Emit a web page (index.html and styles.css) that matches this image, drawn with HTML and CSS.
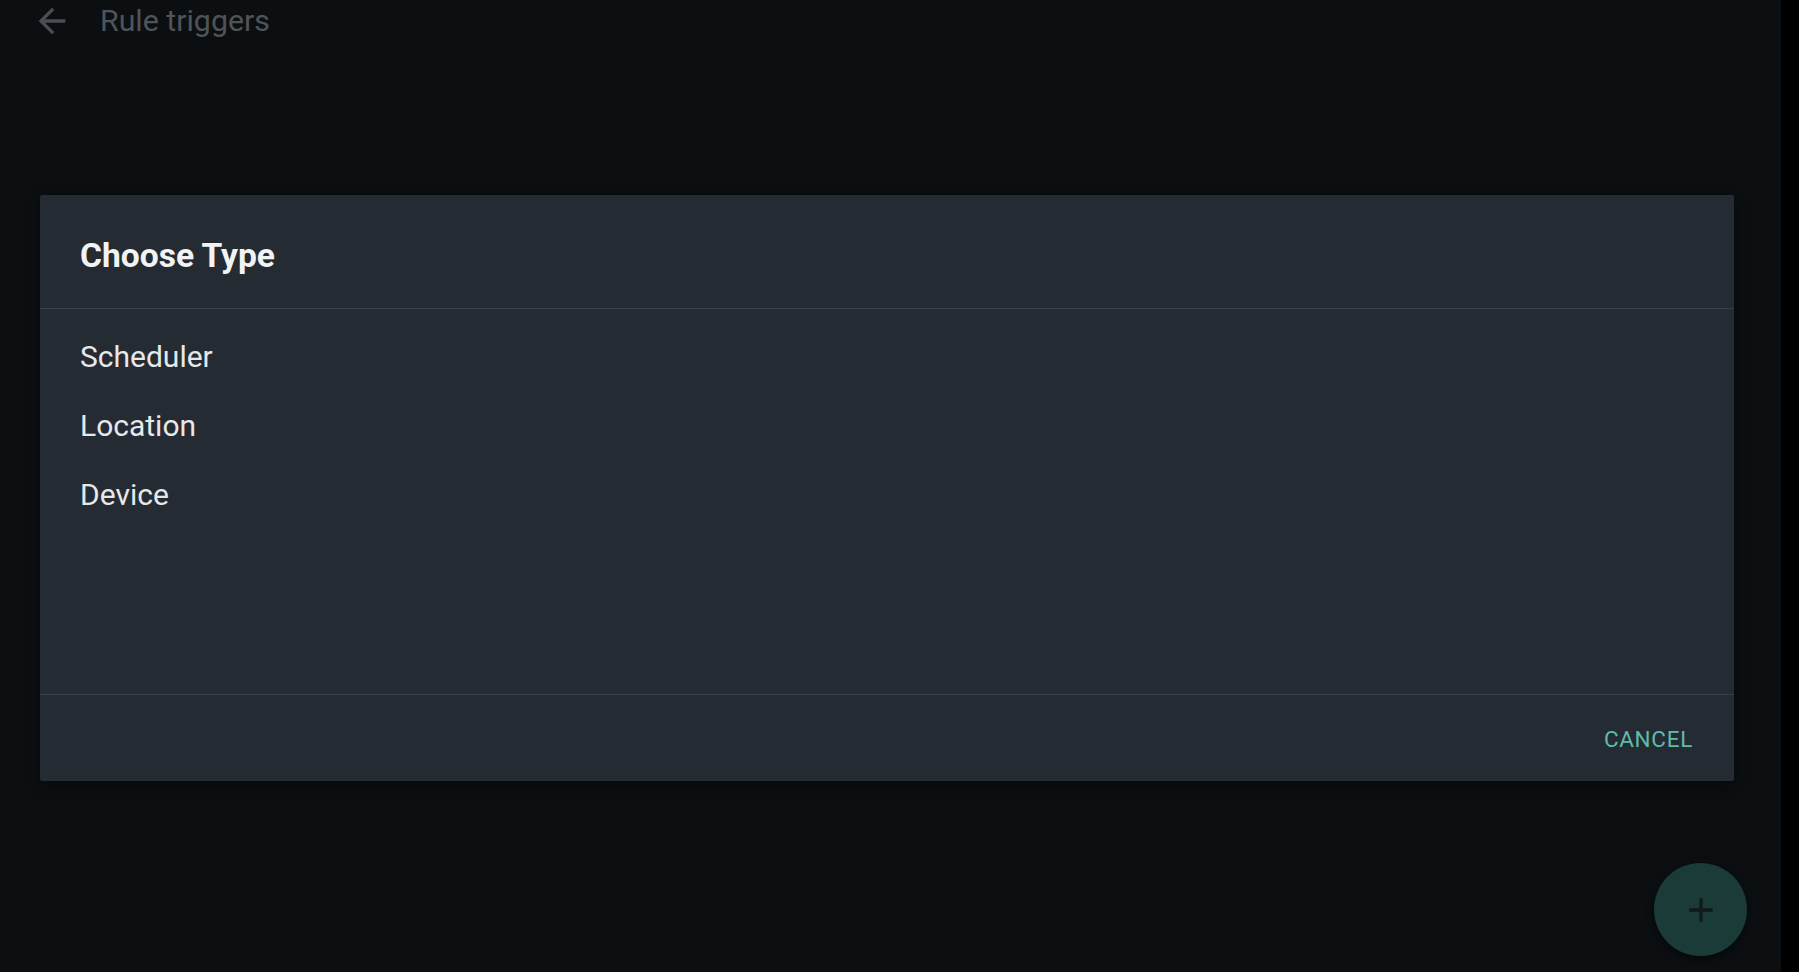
FILE: index.html
```html
<!DOCTYPE html>
<html>

  <head>
    <title>Rule triggers</title>
    <link rel="stylesheet" href="styles.css">
  </head>

  <body>
    <div class="app">
      <header class="toolbar">
        <svg class="back-icon" viewBox="0 0 24 24" width="40" height="40">
          <path d="M20 11H7.83l5.59-5.59L12 4l-8 8 8 8 1.41-1.41L7.83 13H20v-2z" fill="currentColor"/>
        </svg>
        <span class="toolbar-title">Rule triggers</span>
      </header>

      <div class="dialog">
        <div class="dialog-title">Choose Type</div>
        <ul class="dialog-list">
          <li>Scheduler</li>
          <li>Location</li>
          <li>Device</li>
        </ul>
        <div class="dialog-actions">
          <button class="text-button">CANCEL</button>
        </div>
      </div>

      <button class="fab">
        <svg viewBox="0 0 24 24" width="40" height="40">
          <path d="M19 13h-6v6h-2v-6H5v-2h6V5h2v6h6v2z" fill="currentColor"/>
        </svg>
      </button>
    </div>
  </body>

</html>
```

FILE: styles.css
```css
html {
  background-color: #000;
}

body {
  margin: 0;
  font-family: Roboto, "Liberation Sans", sans-serif;
}

.app {
  position: relative;
  width: 1781px;
  height: 972px;
  background-color: #0b0f12;
  overflow: hidden;
}

.toolbar {
  display: flex;
  align-items: center;
  height: 42px;
  padding-left: 32px;
}

.back-icon {
  color: #4a4e51;
  margin-right: 28px;
}

.toolbar-title {
  font-size: 30.3px;
  line-height: 42px;
  color: #505457;
}

.dialog {
  margin: 153px 0 0 40px;
  width: 1694px;
  height: 586px;
  background-color: #252b32;
  border-radius: 2px;
  display: flex;
  flex-direction: column;
  box-shadow: 0 4px 16px rgba(0, 0, 0, 0.4);
}

.dialog-title {
  padding: 41px 40px 0;
  height: 72px;
  font-size: 33.6px;
  line-height: 40px;
  font-weight: bold;
  color: #f2f3f4;
  border-bottom: 1px solid #3a4148;
}

.dialog-list {
  flex: 1;
  list-style: none;
  margin: 0;
  padding: 13px 40px 0;
  border-bottom: 1px solid #3a4148;
}

.dialog-list li {
  font-size: 30px;
  line-height: 69px;
  color: #e6e8ea;
}

.dialog-actions {
  box-sizing: border-box;
  height: 86px;
  display: flex;
  align-items: center;
  justify-content: flex-end;
  padding: 1px 41px 0 0;
}

.text-button {
  background: none;
  border: none;
  padding: 0;
  font-family: Roboto, "Liberation Sans", sans-serif;
  font-size: 22.5px;
  line-height: 26px;
  color: #5fbcab;
  letter-spacing: 0.7px;
  cursor: pointer;
}

.fab {
  position: absolute;
  left: 1654px;
  top: 863px;
  width: 93px;
  height: 93px;
  border-radius: 50%;
  border: none;
  padding: 0;
  background-color: #1a3b37;
  color: #0f1a1a;
  display: flex;
  align-items: center;
  justify-content: center;
  box-shadow: 0 3px 8px rgba(0, 0, 0, 0.5);
}
```
